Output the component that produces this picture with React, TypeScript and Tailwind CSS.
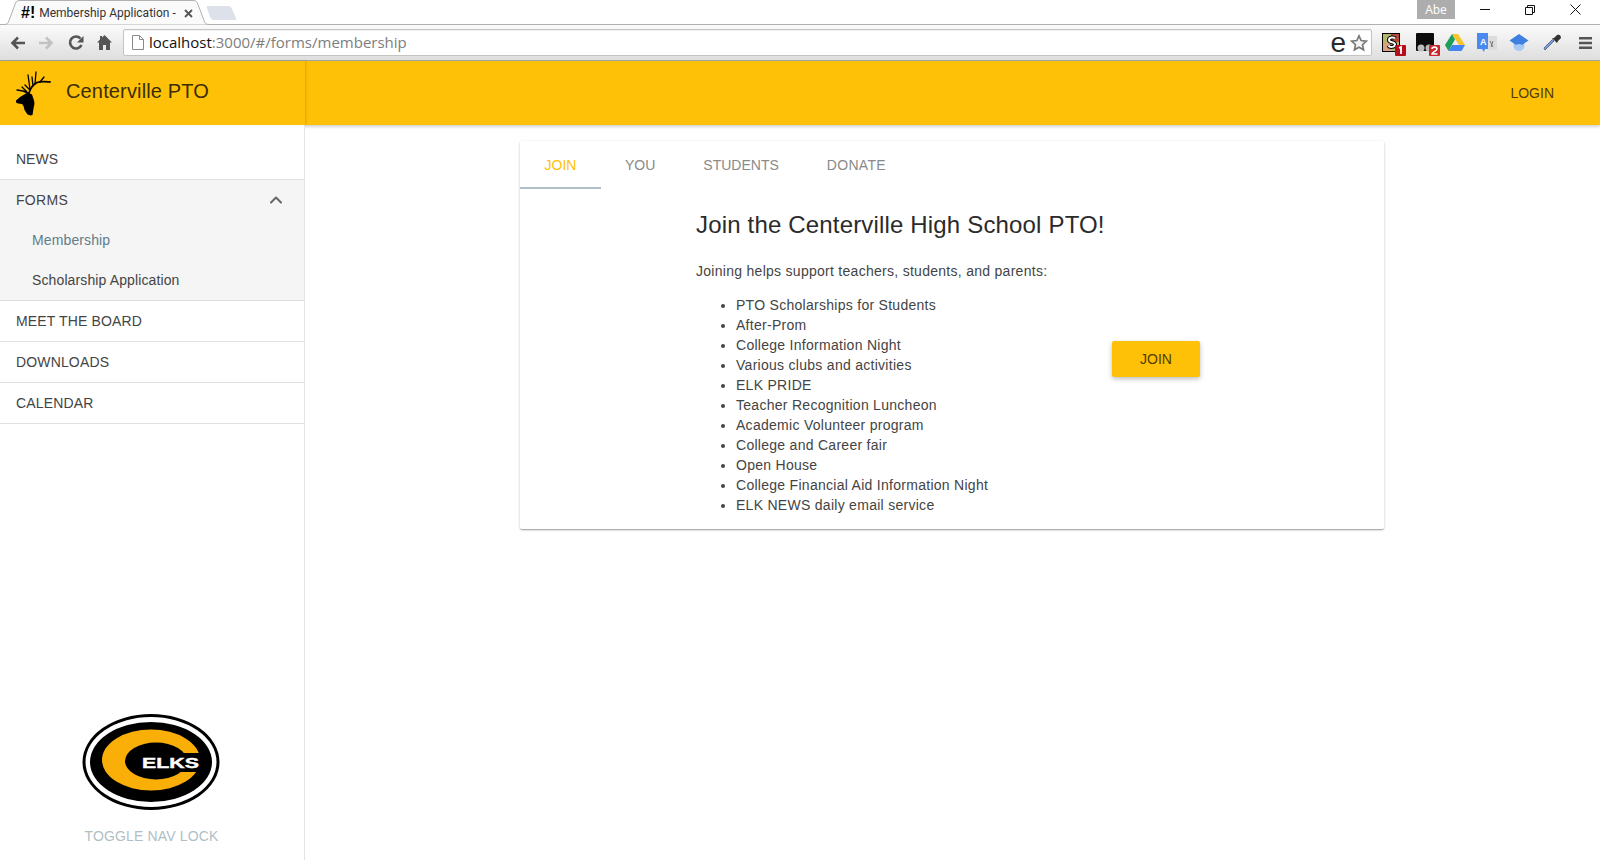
import { ChevronUp } from 'lucide-react';

const navAfter = ['MEET THE BOARD', 'DOWNLOADS', 'CALENDAR'];

const benefits = [
  'PTO Scholarships for Students',
  'After-Prom',
  'College Information Night',
  'Various clubs and activities',
  'ELK PRIDE',
  'Teacher Recognition Luncheon',
  'Academic Volunteer program',
  'College and Career fair',
  'Open House',
  'College Financial Aid Information Night',
  'ELK NEWS daily email service',
];

function ElkIcon() {
  return (
    <svg width="38" height="48" viewBox="14 69 38 48" className="mt-[8px] shrink-0 self-start">
      <path
        d="M16 100.500l4-3.500 5-3 3-1.500 4 2 2 6 .5 3-1 5-1 6.500-2 .5-3-1-3-4.500-1-4-1.500-2-4-.5-2-1z"
        fill="#000"
      />
      <g stroke="#000" fill="none" strokeLinecap="round">
        <path d="M29 93c1.500-5 4-8.500 8-10.500 4-1.500 8-1 13-.5" strokeWidth="1.800" />
        <path d="M35 84l1-12M30 89l-2-14M40 82l4-5M33 86l-1-9" strokeWidth="1.300" />
        <path d="M28 93l-5-2-6-1M27 92l-5-5M30 90l-5-5" strokeWidth="1.400" />
      </g>
    </svg>
  );
}

function ElksLogo() {
  return (
    <svg width="138" height="98" viewBox="0 0 138 98" className="ml-[-1px]">
      <ellipse cx="69" cy="49" rx="68.500" ry="48" fill="#000" />
      <ellipse cx="69" cy="49" rx="65.500" ry="45" fill="#fff" />
      <ellipse cx="69" cy="49" rx="61" ry="40" fill="#000" />
      <ellipse cx="69" cy="47" rx="49" ry="30.500" fill="#f9ae08" />
      <ellipse cx="74" cy="48" rx="31" ry="18.500" fill="#000" />
      <rect x="88" y="40" width="36" height="19" fill="#000" />
      <text
        x="60"
        y="54.500"
        fill="#fff"
        stroke="#fff"
        strokeWidth=".4"
        textLength="57"
        lengthAdjust="spacingAndGlyphs"
        className="font-['Liberation_Sans',sans-serif] text-[15.5px] font-bold"
      >
        ELKS
      </text>
    </svg>
  );
}

function ChromeTab() {
  return (
    <div className="relative flex h-[25px] w-[212px] shrink-0 items-center pl-[21px] pt-px">
      <svg width="212" height="25" viewBox="0 0 212 25" className="absolute left-0 top-0">
        <path d="M0 24.500h4c3 0 4-1 5-4l6-16c1-3 2-4 5-4h173c3 0 4 1 5 4l6 16c1 3 2 4 5 4h3" fill="#fafafa" stroke="#b0b0b0" />
      </svg>
      <span className="relative mr-[4px] font-['Liberation_Sans',sans-serif] text-[16px] font-bold leading-none text-black">#!</span>
      <span className="relative w-[145px] whitespace-nowrap font-['Roboto',sans-serif] text-[12px] text-[#333]">
        Membership Application -
      </span>
      <svg width="9" height="9" viewBox="0 0 9 9" className="relative">
        <path d="M1 1l7 7M8 1l-7 7" stroke="#555" strokeWidth="1.800" />
      </svg>
    </div>
  );
}

function WindowControls() {
  return (
    <div className="ml-auto flex h-6 items-start pr-[2px]">
      <div className="mr-[7px] flex h-[19px] w-[38px] items-center justify-center bg-[#adadad] font-['Open_Sans',sans-serif] text-[12px] text-white">
        Abe
      </div>
      <div className="flex h-[19px] w-[45px] items-center justify-center">
        <svg width="10" height="10" viewBox="0 0 10 10"><path d="M0 4.500h10" stroke="#111" /></svg>
      </div>
      <div className="flex h-[19px] w-[45px] items-center justify-center">
        <svg width="10" height="10" viewBox="0 0 10 10" fill="none" stroke="#111"><path d="M.5 2.500h7v7h-7zM2.500 2V.5h7v7H8" /></svg>
      </div>
      <div className="flex h-[19px] w-[46px] items-center justify-center">
        <svg width="11" height="11" viewBox="0 0 11 11"><path d="M.5.500l10 10M10.500.5l-10 10" stroke="#111" /></svg>
      </div>
    </div>
  );
}

function Extensions() {
  return (
    <div className="ml-[9px] flex items-center">
      <svg width="26" height="26" viewBox="0 0 26 26" className="mr-[8px]">
        <rect x="1.500" y="3.500" width="17" height="18" fill="#b5b56a" stroke="#000" />
        <rect x="10" y="4" width="8" height="8" fill="#b5493b" />
        <rect x="2" y="13" width="8" height="8" fill="#d8a184" />
        <path d="M14 8.500c-1-1.500-6-1.500-6 1.500 0 3 6 1.500 6 4.500 0 3-5.500 3-6.500 1" fill="none" stroke="#000" strokeWidth="4" />
        <path d="M14 8.500c-1-1.500-6-1.500-6 1.500 0 3 6 1.500 6 4.500 0 3-5.500 3-6.500 1" fill="none" stroke="#fff" strokeWidth="2" />
        <rect x="14" y="15" width="11" height="11" rx="1" fill="#b50d1c" />
        <path d="M18 18l2-1v7" fill="none" stroke="#fff" strokeWidth="1.800" />
      </svg>
      <svg width="26" height="26" viewBox="0 0 26 26" className="mr-[4px]">
        <rect x="1" y="3" width="18" height="18" rx="1" fill="#0c0c0c" />
        <circle cx="6" cy="18" r="3.500" fill="#bbb" />
        <circle cx="14" cy="18" r="3.500" fill="#bbb" />
        <rect x="14" y="15" width="11" height="11" rx="1" fill="#c9262c" />
        <path d="M17 19c0-2.500 5-2.500 5 0 0 2-5 3-5 5h5.500" fill="none" stroke="#fff" strokeWidth="1.600" />
      </svg>
      <svg width="20" height="18" viewBox="0 0 20 18" className="mr-[12px]">
        <path d="M7 0h6l7 11h-6z" fill="#f7c42c" />
        <path d="M7 0l3 5.500L3.500 17 0 11z" fill="#1e9e5a" />
        <path d="M3.500 17l3.500-6h13l-3.500 6z" fill="#4285f4" />
      </svg>
      <svg width="20" height="20" viewBox="0 0 20 20" className="mr-[12px]">
        <path d="M11 3h9v14h-9z" fill="#dcdcdc" />
        <path d="M13 8l3 6M16 8l-2 6" stroke="#777" strokeWidth="1" />
        <path d="M0 0h11v16H8l-1 3-2-3H0z" fill="#4a8af0" />
        <text x="3" y="12" fill="#fff" className="font-['Liberation_Sans',sans-serif] text-[9px] font-bold">A</text>
      </svg>
      <svg width="20" height="17" viewBox="0 0 20 17" className="mr-[14px]">
        <circle cx="10" cy="11.500" r="5.500" fill="#a9c9f5" />
        <path d="M10 0l9.500 6.500L13 11c-2-1.500-4-1.500-6 0L.500 6.500z" fill="#3f7fe0" />
      </svg>
      <svg width="18" height="18" viewBox="0 0 18 18" className="mr-[18px]">
        <path d="M2 16l9-9-1.500-1.500L1 14z" fill="#7d9bd8" stroke="#5a6d95" />
        <path d="M9 4l5 5 1-2 3-3c0-3-2-4-4-3l-3 3z" fill="#333" />
      </svg>
      <svg width="13" height="12" viewBox="0 0 13 12">
        <path d="M0 0h13v2.500H0zM0 4.700h13v2.500H0zM0 9.400h13V12H0z" fill="#555" />
      </svg>
    </div>
  );
}

function Toolbar() {
  return (
    <div className="flex h-[35px] items-center bg-gradient-to-b from-[#fbfbfb] to-[#dedede] pl-[10px]">
      <svg width="16" height="14" viewBox="0 0 16 14" className="mr-[12px]">
        <path d="M15 7H3M8 1.500L2.500 7 8 12.500" fill="none" stroke="#555" strokeWidth="2.600" />
      </svg>
      <svg width="16" height="14" viewBox="0 0 16 14" className="mr-[14px]">
        <path d="M1 7h12M8 1.500L13.500 7 8 12.500" fill="none" stroke="#c2c2c2" strokeWidth="2.600" />
      </svg>
      <svg width="16" height="16" viewBox="0 0 16 16" className="mr-[13px]">
        <path d="M13.500 10a6 6 0 1 1-1-6.500" fill="none" stroke="#555" strokeWidth="2.600" />
        <path d="M15.500 1v6.500H9z" fill="#555" />
      </svg>
      <svg width="15" height="15" viewBox="0 0 15 15" className="mr-[11px]">
        <path d="M7.500 0L15 7.500h-2V15H9v-5H6v5H2V7.500H0L3 4.500V1h2v1.500z" fill="#555" />
      </svg>
      <div className="flex h-[27px] w-[1249px] items-center rounded-[2px] border border-[#c4c4c4] bg-white pl-[8px] pr-[2px] shadow-[inset_0_1px_1px_rgba(0,0,0,.06)]">
        <svg width="12" height="15" viewBox="0 0 12 15" className="mr-[5px]">
          <path d="M.5.500h7l4 4v10H.500z" fill="#fff" stroke="#8a8a8a" />
          <path d="M7.500.500v4h4" fill="none" stroke="#8a8a8a" />
        </svg>
        <span className="font-['Open_Sans',sans-serif] text-[15px] text-[#111]">
          localhost<span className="text-[#7d7d7d]">:3000/#/forms/membership</span>
        </span>
        <span className="ml-auto font-['Liberation_Sans',sans-serif] text-[28px] leading-none text-[#2a2a2a]">e</span>
        <svg width="18" height="18" viewBox="0 0 24 24" className="ml-[4px] mr-[1px]">
          <path d="M12 2.500l2.900 6.300 6.900.8-5.100 4.700 1.400 6.800-6.100-3.400-6.100 3.400 1.400-6.800L2.200 9.600l6.900-.8z" fill="#f4f4f4" stroke="#777" strokeWidth="2.200" />
        </svg>
      </div>
      <Extensions />
    </div>
  );
}

function Sidebar() {
  return (
    <aside className="flex h-[735px] w-[305px] shrink-0 flex-col border-r border-[#e3e3e3] bg-white font-['Liberation_Sans',sans-serif] text-[14px] text-[#444]">
      <div className="flex h-[55px] items-end border-b border-[#e0e0e0] pb-[10.500px] pl-4 leading-[20px]">NEWS</div>
      <div className="h-[121px] border-b border-[#dedede] bg-[#f5f5f5]">
        <div className="flex h-[40px] items-center justify-between pl-4 pr-[18px]">
          <span className="tracking-[.3px]">FORMS</span>
          <ChevronUp size={20} strokeWidth={2.400} color="#666" />
        </div>
        <div className="flex h-[40px] items-center pl-8 tracking-[.12px] text-[#607d8b]">Membership</div>
        <div className="flex h-[40px] items-center pl-8 tracking-[.12px]">Scholarship Application</div>
      </div>
      {navAfter.map((item) => (
        <div key={item} className="flex h-[41px] items-center border-b border-[#e0e0e0] pl-4 tracking-[.15px]">
          {item}
        </div>
      ))}
      <div className="mt-auto flex flex-col items-center pb-[14px] pr-px">
        <ElksLogo />
        <div className="mt-[15px] text-[14px] leading-5 tracking-[.15px] text-[#b0bec5]">TOGGLE NAV LOCK</div>
      </div>
    </aside>
  );
}

function MembershipCard() {
  return (
    <section className="h-[388px] w-[864px] rounded-[2px] bg-white font-['Liberation_Sans',sans-serif] shadow-[0_1px_3px_rgba(0,0,0,.2),0_1px_1px_rgba(0,0,0,.14),0_2px_1px_-1px_rgba(0,0,0,.12)]">
      <div className="flex h-[48px] text-[14px]">
        <div className="flex h-[48px] w-[81px] items-center justify-center border-b-2 border-[#b0bec5] pt-[3px] text-[#ffc107]">JOIN</div>
        <div className="flex h-[48px] items-center px-6 text-[#8a8a8a]">YOU</div>
        <div className="flex h-[48px] items-center px-6 text-[#8a8a8a]">STUDENTS</div>
        <div className="flex h-[48px] items-center px-6 tracking-[.3px] text-[#8a8a8a]">DONATE</div>
      </div>
      <div className="flex pl-[176px]">
        <div className="w-[416px]">
          <h1 className="mt-[20px] text-[24px] leading-8 font-normal tracking-[.17px] text-[#2b2b2b]">Join the Centerville High School PTO!</h1>
          <p className="mt-[20px] text-[14px] leading-5 tracking-[.28px] text-[#444]">Joining helps support teachers, students, and parents:</p>
          <ul className="mt-[14px] list-disc pl-10 text-[14px] leading-5 tracking-[.28px] text-[#444]">
            {benefits.map((benefit) => (
              <li key={benefit}>{benefit}</li>
            ))}
          </ul>
        </div>
        <button
          type="button"
          className="mt-[152px] flex h-[36px] w-[88px] items-center justify-center rounded-[2px] bg-[#ffc107] text-[14px] text-[#503c00] shadow-[0_2px_5px_rgba(0,0,0,.26)]"
        >
          JOIN
        </button>
      </div>
    </section>
  );
}

export default function App() {
  return (
    <div className="h-[860px] w-[1600px] overflow-hidden bg-white">
      <div className="border-b border-[#a9a9a9]">
        <div className="flex h-[25px] items-start border-b border-[#b0b0b0] bg-white">
          <ChromeTab />
          <svg width="32" height="16" viewBox="0 0 32 16" className="ml-[-6px] mt-[5px]">
            <path d="M1 1h21c2 0 3 1 4 3l4 9c.5 1.500 0 2-1 2H8c-2 0-3-1-4-3L1 3C.5 1.500.5 1 1 1z" fill="#dde2ea" />
          </svg>
          <WindowControls />
        </div>
        <Toolbar />
      </div>
      <header className="flex h-[64px] bg-[#ffc107] font-['Liberation_Sans',sans-serif] shadow-[0_2px_3px_rgba(0,0,0,.18)]">
        <div className="flex w-[305px] items-center gap-[14px] pb-[5px] pl-[14px] shadow-[1px_0_2px_rgba(0,0,0,.15)]">
          <ElkIcon />
          <span className="text-[20px] tracking-[.15px] text-[#3a2d00]">Centerville PTO</span>
        </div>
        <div className="ml-auto flex items-center pr-[46px] text-[14px] text-[#503c00]">LOGIN</div>
      </header>
      <div className="flex">
        <Sidebar />
        <main className="flex-1 pl-[215px] pt-4">
          <MembershipCard />
        </main>
      </div>
    </div>
  );
}
